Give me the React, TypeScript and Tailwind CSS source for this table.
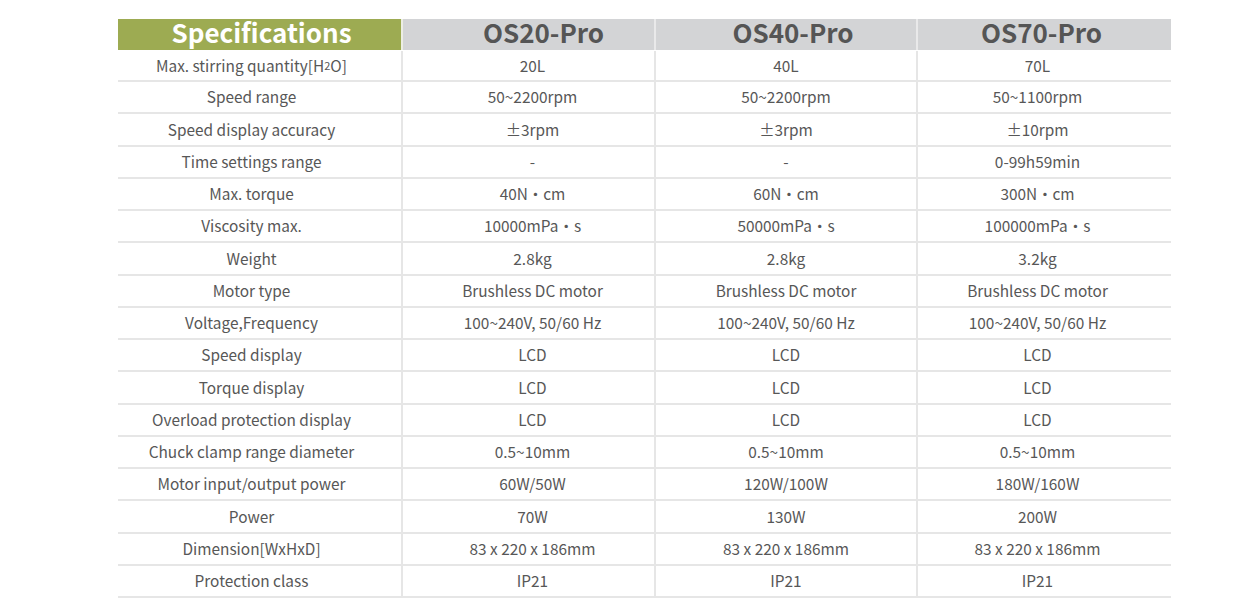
import React from "react";

const rows: [React.ReactNode, string, string, string][] = [
  [
    <>
      Max. stirring quantity[H<span className="text-[11px]">2</span>O]
    </>,
    "20L",
    "40L",
    "70L",
  ],
  ["Speed range", "50~2200rpm", "50~2200rpm", "50~1100rpm"],
  ["Speed display accuracy", "±3rpm", "±3rpm", "±10rpm"],
  ["Time settings range", "-", "-", "0-99h59min"],
  ["Max. torque", "40N・cm", "60N・cm", "300N・cm"],
  ["Viscosity max.", "10000mPa・s", "50000mPa・s", "100000mPa・s"],
  ["Weight", "2.8kg", "2.8kg", "3.2kg"],
  ["Motor type", "Brushless DC motor", "Brushless DC motor", "Brushless DC motor"],
  ["Voltage,Frequency", "100~240V, 50/60 Hz", "100~240V, 50/60 Hz", "100~240V, 50/60 Hz"],
  ["Speed display", "LCD", "LCD", "LCD"],
  ["Torque display", "LCD", "LCD", "LCD"],
  ["Overload protection display", "LCD", "LCD", "LCD"],
  ["Chuck clamp range diameter", "0.5~10mm", "0.5~10mm", "0.5~10mm"],
  ["Motor input/output power", "60W/50W", "120W/100W", "180W/160W"],
  ["Power", "70W", "130W", "200W"],
  ["Dimension[WxHxD]", "83 x 220 x 186mm", "83 x 220 x 186mm", "83 x 220 x 186mm"],
  ["Protection class", "IP21", "IP21", "IP21"],
];

const cols = "grid grid-cols-[285px_253px_262px_253px]";

// the text in the source table sits a little off the column centres
const cellPad = ["pr-[16px] border-r-2", "pl-[8px] border-r-2", "border-r-2", "pr-[14px]"];
const headPad = ["pl-[4px]", "pl-[30px] border-r-2", "pl-[14px] border-r-2", "pr-[6px]"];

export default function App() {
  return (
    <div
      className="w-[1249px] h-[601px] bg-white overflow-hidden pt-[19px] pl-[118px]"
      style={{ fontFamily: '"Noto Sans CJK SC", "Noto Sans", sans-serif' }}
    >
      <div className="w-[1053px]">
        {/* header */}
        <div className={`${cols} h-[31px]`}>
          <div
            className={`bg-[#9dab52] border-r-2 border-[#eceee3] flex items-center justify-center pb-[5px] text-white text-[26px] font-bold leading-none ${headPad[0]}`}
          >
            Specifications
          </div>
          {["OS20-Pro", "OS40-Pro", "OS70-Pro"].map((m, i) => (
            <div
              key={m}
              className={`bg-[#d3d4d6] border-[#e9e9ea] flex items-center justify-center pb-[5px] text-[#555] text-[26px] font-bold leading-none ${headPad[i + 1]}`}
            >
              {m}
            </div>
          ))}
        </div>

        {/* rows */}
        {rows.map((r, ri) => (
          <div
            key={ri}
            className={`${cols} ${ri === 0 ? "h-[32px] pt-[1px]" : "h-[32.25px]"} border-b-2 border-[#e6e6e6] text-[15.4px] text-[#575757]`}
          >
            {r.map((c, ci) => (
              <div
                key={ci}
                className={`flex items-center justify-center whitespace-nowrap leading-none border-[#e6e6e6] ${cellPad[ci]}`}
              >
                {c}
              </div>
            ))}
          </div>
        ))}
      </div>
    </div>
  );
}
